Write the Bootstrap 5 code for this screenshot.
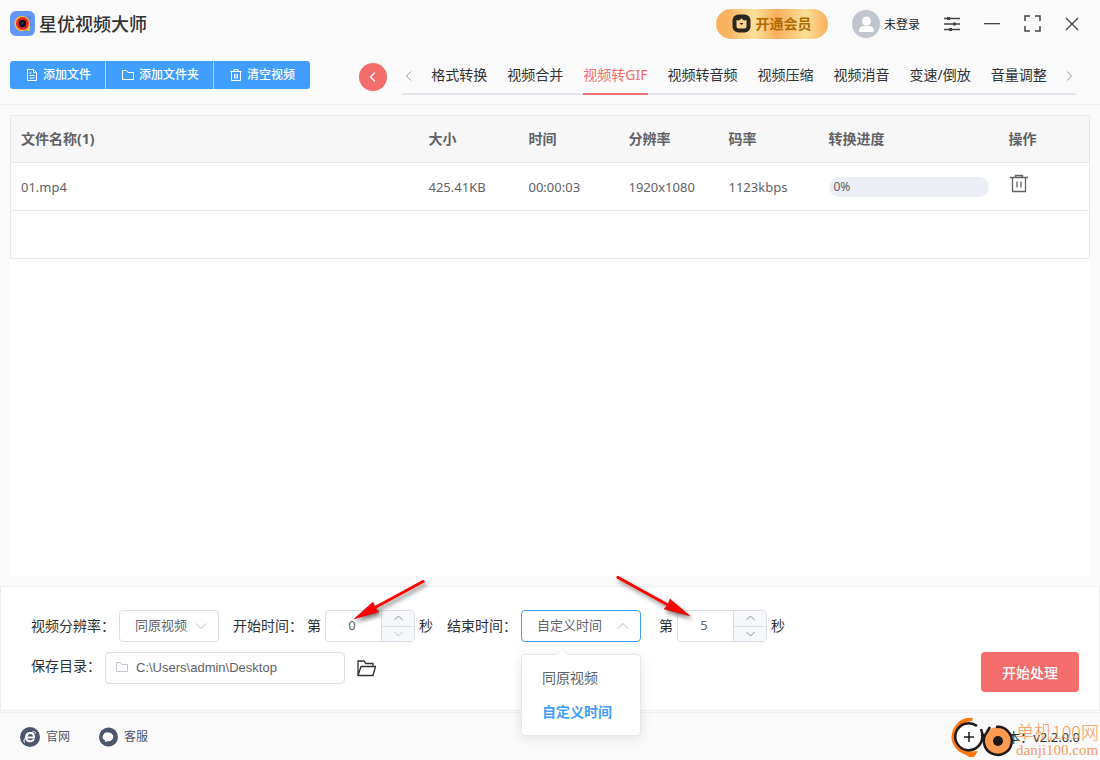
<!DOCTYPE html>
<html lang="zh-CN">
<head>
<meta charset="utf-8">
<meta name="viewport" content="width=device-width, initial-scale=1">
<title>星优视频大师</title>
<link href="https://cdn.jsdelivr.net/npm/bootstrap@5.3.0/dist/css/bootstrap.min.css" rel="stylesheet">
<style>
  body { font-family: "Noto Sans", "Noto Sans CJK SC", sans-serif; font-size: 14px; line-height: 20px; color: #303133; background: #fafafa; }
  .cjk-first { font-family: "Noto Sans CJK SC", sans-serif; }
  svg { display: block; flex: none; }
  .plain-btn { border: 0; padding: 0; background: none; color: inherit; }

  .title-bar { height: 47px; padding: 0 21px 0 10px; }
  .app-name { font-size: 18px; line-height: 24px; font-weight: 500; color: #303133; padding-bottom: 2px; }
  .vip-btn { width: 112px; height: 30px; border: 0; font-weight: 700; font-size: 14px; color: #b06a00; font-family: "Noto Sans CJK SC", sans-serif;
    background: linear-gradient(90deg, #f8b25e 0%, #f8b25e 10%, #fce09a 34%, #f7ae5c 54%, #fcdf98 80%, #f8b460 98%); }
  .vip-btn span { padding-bottom: 2px; }
  .user-name { font-size: 12px; color: #222; }
  .window-tools { gap: 24px; color: #444; }

  .tool-bar { padding: 8px 24px 9px 10px; border-bottom: 1px solid #eee; }
  .file-actions .btn { --bs-btn-bg: #409eff; --bs-btn-color: #fff; --bs-btn-hover-bg: #66b1ff; --bs-btn-hover-color: #fff; --bs-btn-font-size: 12px; --bs-btn-font-weight: 500;
    height: 28px; padding: 0 15px 0 16px; border: 0; border-radius: 3px; gap: 5px; line-height: 28px; }
  .file-actions .btn + .btn { border-left: 1px solid #a8d3ff; }
  .back-btn { width: 28px; height: 28px; margin: 4px 15px 0 49px; background: #f56c6c; color: #fff; }
  .tab-strip { border-bottom: 2px solid #e4e7ed; height: 40px; min-width: 0; color: #909399; }
  .tab-strip .nav { gap: 20px; }
  .tab-strip .nav-link { padding: 0; height: 40px; line-height: 40px; color: #303133; white-space: nowrap; border-bottom: 2px solid transparent; }
  .tab-strip .nav-link.active { color: #f56c6c; border-color: #f56c6c; }

  .file-table { table-layout: fixed; margin: 0; border: 1px solid #e8e8e8; color: #606266; }
  .file-table th, .file-table td { height: 48px; padding: 0 10px; vertical-align: middle; border-bottom: 1px solid #e8e8e8; color: #606266; background: #fff; font-size: 13px; }
  .file-table th { height: 47px; background: #f7f7f7; font-size: 14px; font-weight: 700; }
  .file-table .progress { height: 20px; border-radius: 10px; background: #ebeef5; font-size: 12px; line-height: 20px; padding-left: 5px; color: #606266; }

  .list-area { padding: 10px; }
  .option-panel { border: 1px solid #eee; background: #fff; padding: 23px 20px 18px 30px; margin-bottom: 1px; }
  .option-panel label, .unit { white-space: nowrap; }
  .option-row + .option-row { margin-top: 10px; }
  .after-label { margin-left: 4px; }
  .next-field { margin-left: 14px; }
  .option-panel .form-select, .option-panel .form-control { height: 32px; border: 1px solid #dcdfe6; border-radius: 4px; color: #606266; font-size: 13px; line-height: 20px; box-shadow: none; }
  .option-panel .form-select { padding: 0 30px 2px 15px; background-size: 12px 12px; background-position: right 11px center;
    background-image: url("data:image/svg+xml,%3Csvg xmlns='http://www.w3.org/2000/svg' viewBox='0 0 12 12'%3E%3Cpath fill='none' stroke='%23b4b8c0' d='M1 3.5l5 5 5-5'/%3E%3C/svg%3E"); }
  .option-panel .form-select.is-open { border-color: #409eff;
    background-image: url("data:image/svg+xml,%3Csvg xmlns='http://www.w3.org/2000/svg' viewBox='0 0 12 12'%3E%3Cpath fill='none' stroke='%23b4b8c0' d='M1 8.5l5-5 5 5'/%3E%3C/svg%3E"); }
  .w-res { width: 100px; }
  .w-end { width: 120px; }
  .number-box { width: 90px; height: 32px; border: 1px solid #dcdfe6; border-radius: 4px; overflow: hidden; background: #fff; }
  .number-box input { width: 55px; border: 0; padding: 0 3px 2px 0; text-align: center; font-size: 13px; color: #606266; outline: 0; background: none; appearance: textfield; -moz-appearance: textfield; }
  .number-box input::-webkit-inner-spin-button { appearance: none; -webkit-appearance: none; }
  .steppers { border-left: 1px solid #dcdfe6; background: #f5f7fa; color: #909399; }
  .steppers button { width: 32px; }
  .steppers button + button { border-top: 1px solid #dcdfe6; }
  .steppers button:disabled { color: #c0c4cc; }
  .path-box { width: 240px; }
  .path-box .form-control { padding: 0 10px 1px 30px; font-family: "Liberation Sans", sans-serif; }
  .path-box svg { position: absolute; left: 11px; top: 9px; color: #c0c4cc; }
  .start-btn { --bs-btn-bg: #f56c6c; --bs-btn-color: #fff; --bs-btn-hover-bg: #f78989; --bs-btn-hover-color: #fff; --bs-btn-font-size: 14px; width: 98px; height: 40px; border: 0; border-radius: 4px; padding: 0; font-weight: 500; }

  .time-menu { top: 44px; left: 0; width: 120px; padding: 6px 0; border: 1px solid #e4e7ed; border-radius: 4px; background: #fff; box-shadow: 0 2px 12px rgba(0,0,0,.1); z-index: 5; }
  .time-menu::before { content: ""; position: absolute; top: -5px; left: 36px; width: 9px; height: 9px; background: #fff; border: solid #ebeef5; border-width: 1px 0 0 1px; transform: rotate(45deg); }
  .time-menu button { display: block; width: 100%; height: 34px; padding: 0 20px; text-align: left; color: #606266; }
  .time-menu button.chosen { color: #409eff; font-weight: 700; }

  .pointer { position: absolute; z-index: 6; pointer-events: none; overflow: visible; filter: drop-shadow(2px 3px 2px rgba(0,0,0,.5)); }
  .pointer-start { left: 26px; top: -32px; }
  .pointer-end { left: -64px; top: -37px; }

  .status-bar { height: 48px; padding: 0 20px; border-top: 1px solid #eee; font-size: 12px; }
  .status-bar a { color: #4c556e; text-decoration: none; gap: 6px; }
  .status-bar a + a { margin-left: 28px; }
  .version { font-size: 13px; }
  .site-mark { position: absolute; right: 1px; bottom: 1px; color: #fb9a5d; gap: 2px; }
  .site-name { font-size: 18px; line-height: 20px; font-weight: 300; }
  .site-url { font-family: "Liberation Serif", serif; font-size: 15px; line-height: 18px; }
</style>
</head>
<body class="d-flex flex-column min-vh-100">

<header class="title-bar d-flex align-items-center">
  <svg width="25" height="25" viewBox="0 0 25 25"><rect width="25" height="25" rx="6" fill="#6597fb"/><path d="M16 5h5v10l-2 6-4-1z" fill="#5a8ae0"/><path d="M12.500 5a7.500 7.500 0 0 1 7.500 7.500V20h-3l-1-1.200A7.500 7.500 0 1 1 12.500 5z" fill="#f2c331"/><circle cx="12.500" cy="12.500" r="6.500" fill="#e8252c"/><circle cx="12.500" cy="12.500" r="3.700" fill="#0a0a12"/><circle cx="12.500" cy="12.500" r="1" fill="#2c5a6c"/></svg>
  <span class="app-name cjk-first ms-1">星优视频大师</span>
  <button type="button" class="vip-btn rounded-pill d-flex align-items-center justify-content-center ms-auto p-0">
    <svg class="me-1" width="19" height="19" viewBox="0 0 19 19"><rect x=".5" y=".5" width="18" height="18" rx="6" fill="#2b2620"/><path d="M4.500 6l2.500.5 2.500-2 2.500 2 2.500-.5v6.500q0 2-2 2h-6q-2 0-2-2z" fill="#fbd38c"/><path d="M7.500 9l2 2 2-2z" fill="#2b2620"/></svg>
    <span>开通会员</span>
  </button>
  <a href="#" class="user-name d-flex align-items-center text-decoration-none ms-4 me-4">
    <svg class="me-1" width="28" height="28" viewBox="0 0 28 28"><circle cx="14" cy="14" r="14" fill="#c0c4cc"/><circle cx="14.500" cy="11" r="4.500" fill="#fff"/><path d="M7 21q0-5 5-5h5q5 0 5 5 0 1-1 1H8q-1 0-1-1z" fill="#fff"/></svg>
    <span class="cjk-first">未登录</span>
  </a>
  <div class="window-tools d-flex align-items-center">
    <button type="button" class="plain-btn" aria-label="设置"><svg width="16" height="16" viewBox="0 0 16 16" fill="none" stroke="currentColor" stroke-width="1.300"><path d="M0 2.500h16M0 8h16M0 13.500h16"/><path d="M4.500 1v3M10.500 6.500v3M6.500 12v3" stroke-width="3"/></svg></button>
    <button type="button" class="plain-btn" aria-label="最小化"><svg width="16" height="16" viewBox="0 0 16 16"><path d="M0 7h16v1.300H0z" fill="currentColor"/></svg></button>
    <button type="button" class="plain-btn" aria-label="最大化"><svg width="17" height="17" viewBox="0 0 17 17" fill="none" stroke="currentColor" stroke-width="1.500"><path d="M1 6V1h5M11 1h5v5M16 11v5h-5M6 16H1v-5"/></svg></button>
    <button type="button" class="plain-btn" aria-label="关闭"><svg width="14" height="14" viewBox="0 0 14 14" fill="none" stroke="currentColor" stroke-width="1.300"><path d="M1 1l12 12M13 1L1 13"/></svg></button>
  </div>
</header>

<div class="tool-bar d-flex align-items-center">
  <div class="btn-group file-actions">
    <button type="button" class="btn d-flex align-items-center"><svg width="12" height="12" viewBox="0 0 12 12" fill="none" stroke="currentColor"><path d="M1.500.5h6l3 3v8h-9zM7.500.5v3h3M3.500 4h2M3.500 6.500h5M3.500 9h5"/></svg><span>添加文件</span></button>
    <button type="button" class="btn d-flex align-items-center"><svg width="12" height="12" viewBox="0 0 12 12" fill="none" stroke="currentColor"><path d="M.5 1.500h4l1.500 2h5.500v7H.5z"/></svg><span>添加文件夹</span></button>
    <button type="button" class="btn d-flex align-items-center"><svg width="12" height="12" viewBox="0 0 12 12" fill="none" stroke="currentColor"><path d="M.5 2.500h11M4 2.500v-2h4v2M1.500 2.500v9h9v-9M4.500 5v4.500M7.500 5v4.500M6 5v4.500"/></svg><span>清空视频</span></button>
  </div>
  <button type="button" class="plain-btn back-btn rounded-circle d-flex align-items-center justify-content-center flex-shrink-0" aria-label="返回"><svg width="10" height="10" viewBox="0 0 10 10" fill="none" stroke="currentColor" stroke-width="1.300"><path d="M7 0.500L2.500 5 7 9.500"/></svg></button>
  <nav class="tab-strip d-flex flex-grow-1 justify-content-between">
    <button type="button" class="plain-btn pt-1 ps-1" aria-label="向前"><svg width="6" height="10" viewBox="0 0 6 10" fill="none" stroke="currentColor"><path d="M5 .5L.5 5 5 9.500"/></svg></button>
    <div class="nav flex-nowrap">
      <a class="nav-link" href="#">格式转换</a>
      <a class="nav-link" href="#">视频合并</a>
      <a class="nav-link active" aria-current="page" href="#">视频转GIF</a>
      <a class="nav-link" href="#">视频转音频</a>
      <a class="nav-link" href="#">视频压缩</a>
      <a class="nav-link" href="#">视频消音</a>
      <a class="nav-link" href="#">变速/倒放</a>
      <a class="nav-link" href="#">音量调整</a>
    </div>
    <button type="button" class="plain-btn pt-1 pe-1" aria-label="向后"><svg width="6" height="10" viewBox="0 0 6 10" fill="none" stroke="currentColor"><path d="M1 .5L5.500 5 1 9.500"/></svg></button>
  </nav>
</div>

<main class="d-flex flex-column flex-grow-1">
  <section class="list-area flex-grow-1 d-flex flex-column">
    <div class="bg-white flex-grow-1">
      <table class="table file-table">
        <colgroup><col><col style="width:100px"><col style="width:100px"><col style="width:100px"><col style="width:100px"><col style="width:180px"><col style="width:91px"></colgroup>
        <thead><tr><th>文件名称(1)</th><th>大小</th><th>时间</th><th>分辨率</th><th>码率</th><th>转换进度</th><th>操作</th></tr></thead>
        <tbody>
          <tr><td>01.mp4</td><td>425.41KB</td><td>00:00:03</td><td>1920x1080</td><td>1123kbps</td>
            <td><div class="progress" role="progressbar" aria-valuenow="0" aria-valuemin="0" aria-valuemax="100" aria-label="转换进度">0%</div></td>
            <td><button type="button" class="plain-btn" aria-label="删除"><svg width="20" height="20" viewBox="0 0 20 20" fill="none" stroke="currentColor" stroke-width="1.300"><path d="M1 3.500h18M6.500 3.500v-2h7v2M3.500 3.500v14h13v-14M8 7.500v6M12 7.500v6"/></svg></button></td></tr>
          <tr><td colspan="7"></td></tr>
        </tbody>
      </table>
    </div>
  </section>

  <form class="option-panel">
    <div class="option-row d-flex align-items-center">
      <label for="res">视频分辨率：</label>
      <select id="res" class="form-select w-res cjk-first after-label"><option>同原视频</option></select>
      <label for="t0" class="next-field">开始时间：</label>
      <span class="unit after-label">第</span>
      <div class="position-relative after-label">
        <div class="number-box d-flex">
          <input id="t0" type="number" value="0" min="0">
          <div class="steppers d-flex flex-column">
            <button type="button" class="plain-btn flex-fill d-flex align-items-center justify-content-center" aria-label="增加"><svg width="9" height="6" viewBox="0 0 9 6" fill="none" stroke="currentColor"><path d="M.5 5l4-4 4 4"/></svg></button>
            <button type="button" disabled class="plain-btn flex-fill d-flex align-items-center justify-content-center" aria-label="减少"><svg width="9" height="6" viewBox="0 0 9 6" fill="none" stroke="currentColor"><path d="M.5 1l4 4 4-4"/></svg></button>
          </div>
        </div>
        <svg class="pointer pointer-start" width="76" height="44" viewBox="0 0 76 44"><path d="M72 3.500L25 29" stroke="#ff0000" stroke-width="3" stroke-linecap="round"/><path d="M3 41L22 24 23.500 28 26 32 28 34z" fill="#ff0000" stroke="#c00808" stroke-width=".5"/></svg>
      </div>
      <span class="unit after-label">秒</span>
      <label for="end" class="next-field">结束时间：</label>
      <div class="position-relative after-label">
        <select id="end" class="form-select w-end is-open cjk-first"><option>同原视频</option><option selected>自定义时间</option></select>
        <div class="time-menu position-absolute">
          <button type="button" class="plain-btn">同原视频</button>
          <button type="button" class="plain-btn chosen">自定义时间</button>
        </div>
      </div>
      <label for="t1" class="unit next-field ps-1">第</label>
      <div class="position-relative after-label">
        <div class="number-box d-flex">
          <input id="t1" type="number" value="5" min="0">
          <div class="steppers d-flex flex-column">
            <button type="button" class="plain-btn flex-fill d-flex align-items-center justify-content-center" aria-label="增加"><svg width="9" height="6" viewBox="0 0 9 6" fill="none" stroke="currentColor"><path d="M.5 5l4-4 4 4"/></svg></button>
            <button type="button" class="plain-btn flex-fill d-flex align-items-center justify-content-center" aria-label="减少"><svg width="9" height="6" viewBox="0 0 9 6" fill="none" stroke="currentColor"><path d="M.5 1l4 4 4-4"/></svg></button>
          </div>
        </div>
        <svg class="pointer pointer-end" width="78" height="46" viewBox="0 0 78 46"><path d="M5 4.500L54 31.500" stroke="#ff0000" stroke-width="3" stroke-linecap="round"/><path d="M77 43L51 36 54 33 56 29 57 26z" fill="#ff0000" stroke="#c00808" stroke-width=".5"/></svg>
      </div>
      <span class="unit after-label">秒</span>
    </div>
    <div class="option-row d-flex align-items-start">
      <label for="dir" class="pt-1">保存目录：</label>
      <div class="path-box position-relative after-label">
        <svg width="12" height="12" viewBox="0 0 12 12" fill="none" stroke="currentColor"><path d="M.5 1.500h4l1.500 2h5.500v7H.5z"/></svg>
        <input id="dir" class="form-control" type="text" value="C:\Users\admin\Desktop">
      </div>
      <button type="button" class="plain-btn pt-1 mt-1 ms-2 ps-1" aria-label="打开目录"><svg width="19" height="17" viewBox="0 0 19 17" fill="none" stroke="currentColor" stroke-width="1.300"><path d="M1 15.500V1h6l2 2.500h7v3M1 15.500L4 6.500h14.500L16 15.500z"/></svg></button>
      <button type="submit" class="btn start-btn ms-auto">开始处理</button>
    </div>
  </form>
</main>

<footer class="status-bar d-flex align-items-center position-relative">
  <a href="#" class="d-flex align-items-center"><svg width="20" height="20" viewBox="0 0 20 20"><circle cx="10" cy="10" r="10" fill="#4c556e"/><path d="M6.500 10.500h7.500q.2-4.500-3.800-4.500T6 10.300q0 4 4.200 4 2.600 0 3.600-2.200" fill="none" stroke="#fff" stroke-width="2"/><path d="M5 15.500Q2.500 15 5.500 10.500 10 4.500 14.500 4.500q1.500.5.500 2.500" fill="none" stroke="#fff"/></svg><span>官网</span></a>
  <a href="#" class="d-flex align-items-center"><svg width="20" height="20" viewBox="0 0 20 20"><circle cx="10.500" cy="10" r="9.500" fill="#4c556e"/><path d="M10.500 5.500a4.700 4.300 0 0 1 0 8.700l-1.500 0q-1 1-2 .8l.2-1.500A4.700 4.300 0 0 1 10.500 5.500z" fill="#fff"/></svg><span>客服</span></a>
  <span class="version ms-auto">版本：v2.2.0.0</span>
  <div class="site-mark d-flex align-items-end">
    <svg width="64" height="42" viewBox="0 0 64 42" fill="none"><path d="M23 1Q12-1 5 9q-6 9-2 18 4 8 13 11 3 3 8 2l4-6q-13 2-19-5-6-8-2-16Q11 5 22 4z" fill="#ff7a10"/><circle cx="19" cy="20" r="14" fill="#fff"/><path d="M27 9A13.500 13.500 0 1 0 32 17" stroke="#20191a" stroke-width="2.500"/><path d="M19 15v10M14 20h10" stroke="#20191a" stroke-width="1.500"/><circle cx="48" cy="24" r="14" fill="#fb9a50"/><path d="M31 12q1 5 3 8M46 10A14 14 0 1 1 37 15l3-5" stroke="#20191a" stroke-width="2.500"/><circle cx="48" cy="24" r="5" fill="#20191a"/></svg>
    <div>
      <div class="site-name cjk-first">单机100网</div>
      <div class="site-url">danji100.com</div>
    </div>
  </div>
</footer>

<script src="https://cdn.jsdelivr.net/npm/bootstrap@5.3.0/dist/js/bootstrap.bundle.min.js"></script>
</body>
</html>
